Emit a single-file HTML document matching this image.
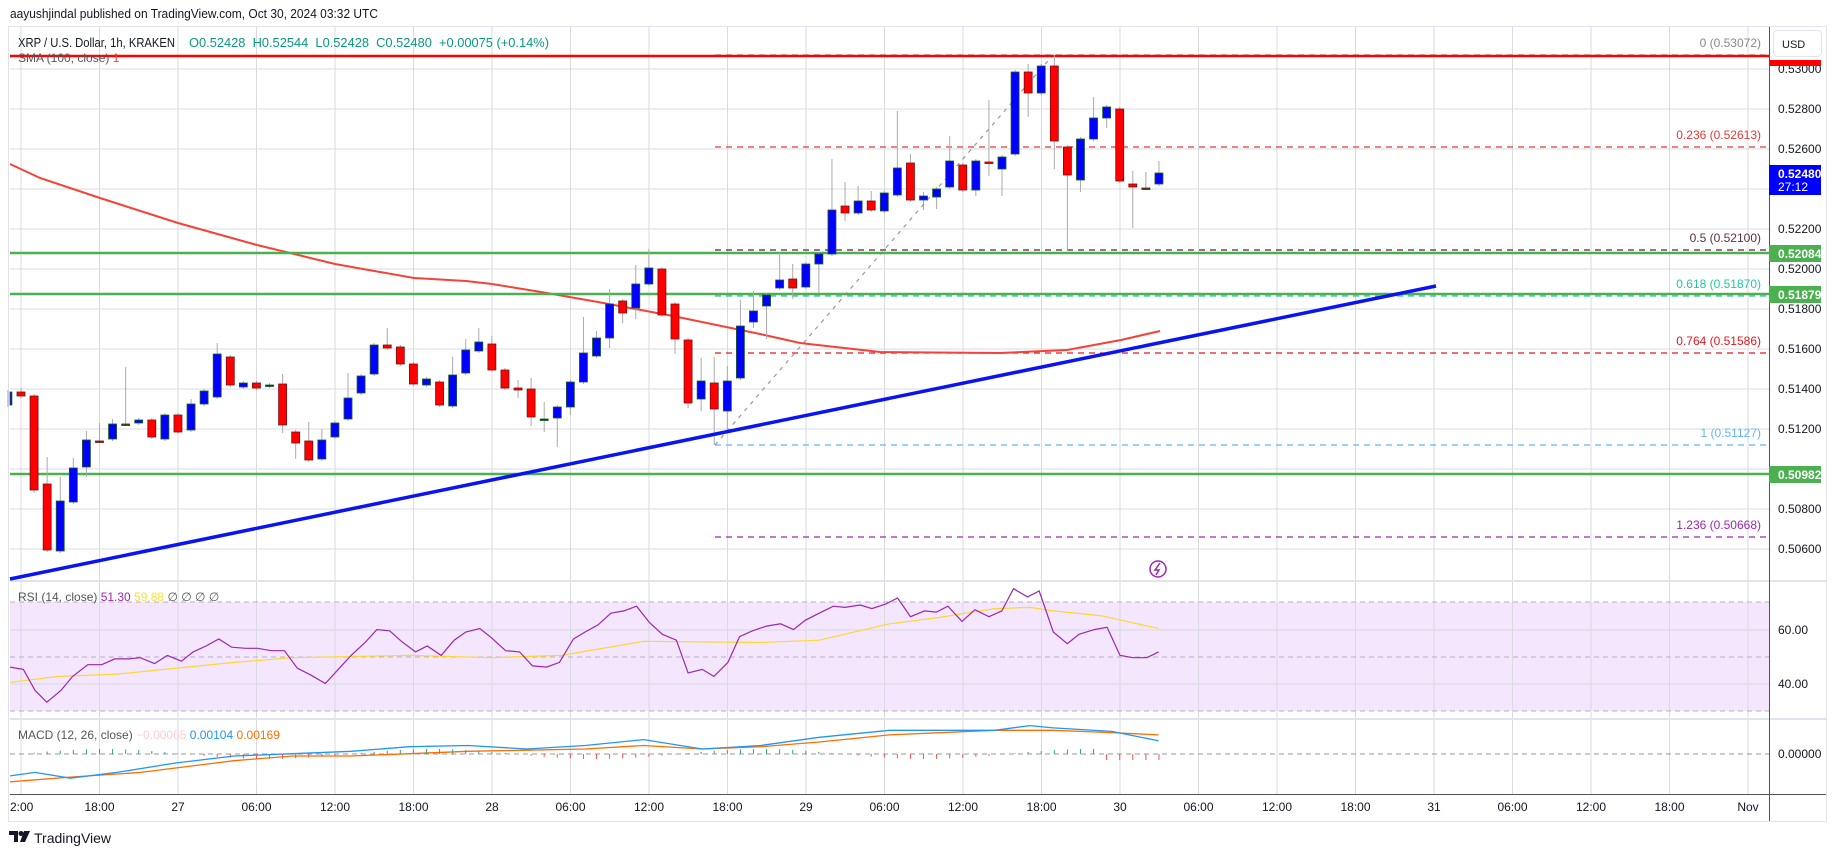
<!DOCTYPE html>
<html><head><meta charset="utf-8">
<style>
html,body{margin:0;padding:0;background:#fff;width:1835px;height:857px;overflow:hidden;font-family:"Liberation Sans","DejaVu Sans",sans-serif;}
svg text{font-family:"Liberation Sans","DejaVu Sans",sans-serif;}
</style></head>
<body>
<svg id="s" width="1835" height="857" viewBox="0 0 1835 857" xmlns="http://www.w3.org/2000/svg">
<rect x="0" y="0" width="1835" height="857" fill="#fff"/>
<text x="10" y="18" font-size="13" fill="#131722" textLength="368" lengthAdjust="spacingAndGlyphs">aayushjindal published on TradingView.com, Oct 30, 2024 03:32 UTC</text>
<rect x="8.5" y="26.5" width="1818" height="795" fill="#fff" stroke="#e0e3eb"/>
<rect x="10" y="602" width="1759" height="109" fill="#f3e6fd"/>
<g id="grid" stroke="#d9dbe0" stroke-width="1"></g>
<g stroke="#b8b0c0" stroke-dasharray="5,4" stroke-width="1">
<line x1="10" y1="602" x2="1769" y2="602"/><line x1="10" y1="657" x2="1769" y2="657"/><line x1="10" y1="711" x2="1769" y2="711"/>
<line x1="10" y1="754" x2="1769" y2="754" stroke="#999"/>
</g>
<line x1="10" y1="581" x2="1826" y2="581" stroke="#e0e3eb" stroke-width="2"/>
<line x1="10" y1="719" x2="1826" y2="719" stroke="#e0e3eb" stroke-width="2"/>
<g stroke-width="1.2" stroke-dasharray="6,5">
<line x1="715" y1="55" x2="1769" y2="55" stroke="#888"/>
<line x1="715" y1="147" x2="1769" y2="147" stroke="#e53935"/>
<line x1="715" y1="250" x2="1769" y2="250" stroke="#5d1f3f"/>
<line x1="715" y1="296" x2="1769" y2="296" stroke="#26c6a0"/>
<line x1="715" y1="353" x2="1769" y2="353" stroke="#e4181e"/>
<line x1="715" y1="445" x2="1769" y2="445" stroke="#64b5f6"/>
<line x1="715" y1="537" x2="1769" y2="537" stroke="#9c27b0"/>
<line x1="715" y1="445" x2="1053" y2="55" stroke="#999" stroke-dasharray="4,5"/>
</g>
<g font-size="12" text-anchor="end">
<text x="1761" y="47" fill="#888">0 (0.53072)</text>
<text x="1761" y="139" fill="#e53935">0.236 (0.52613)</text>
<text x="1761" y="242" fill="#5d2e46">0.5 (0.52100)</text>
<text x="1761" y="288" fill="#26c6a0">0.618 (0.51870)</text>
<text x="1761" y="345" fill="#e4181e">0.764 (0.51586)</text>
<text x="1761" y="437" fill="#64b5f6">1 (0.51127)</text>
<text x="1761" y="529" fill="#9c27b0">1.236 (0.50668)</text>
</g>
<polyline fill="none" stroke="#f44336" stroke-width="2" points="10,164 40,178 100,198 178,223 257,245 290,253 335,264 414,278 466,281 492,284 541,292 598,302 673,316 760,334 800,343 880,352 1000,353 1067,350 1121,340 1160,331"/>
<line x1="10" y1="56" x2="1769" y2="56" stroke="#ff0000" stroke-width="2.5"/>
<g stroke="#4caf50" stroke-width="2.5">
<line x1="10" y1="253" x2="1769" y2="253"/><line x1="10" y1="294" x2="1769" y2="294"/><line x1="10" y1="474" x2="1769" y2="474"/>
</g>
<g id="candles"></g>
<line x1="10" y1="579" x2="1436" y2="286" stroke="#0a14f0" stroke-width="3.5"/>
<circle cx="1158" cy="569" r="8" fill="none" stroke="#9c27b0" stroke-width="1.5"/>
<path d="M1160 563 L1155 570 L1159 570 L1156 575" fill="none" stroke="#9c27b0" stroke-width="1.5"/>
<g id="ind"></g>
<g font-size="13">
<text x="18" y="47" fill="#131722" textLength="157" lengthAdjust="spacingAndGlyphs">XRP / U.S. Dollar, 1h, KRAKEN</text>
<text x="189" y="47" fill="#089981" xml:space="preserve" textLength="360" lengthAdjust="spacingAndGlyphs">O0.52428  H0.52544  L0.52428  C0.52480  +0.00075 (+0.14%)</text>
<text x="18" y="62" fill="#555" font-size="12">SMA (100, close) <tspan fill="#f44336">1</tspan></text>
<text x="18" y="601" fill="#555" font-size="12">RSI (14, close) <tspan fill="#9c27b0">51.30</tspan> <tspan fill="#f7e13c">59.88</tspan> <tspan fill="#555">∅ ∅ ∅ ∅</tspan></text>
<text x="18" y="739" fill="#555" font-size="12">MACD (12, 26, close) <tspan fill="#ffcdd2">−0.00065</tspan> <tspan fill="#2196f3">0.00104</tspan> <tspan fill="#ff6d00">0.00169</tspan></text>
</g>
<line x1="1769.5" y1="27" x2="1769.5" y2="821" stroke="#50535e"/>
<line x1="10" y1="794.5" x2="1826" y2="794.5" stroke="#50535e"/>
<g font-size="12" fill="#131722">
<text x="1778" y="73">0.53000</text><text x="1778" y="113">0.52800</text><text x="1778" y="153">0.52600</text>
<text x="1778" y="233">0.52200</text><text x="1778" y="273">0.52000</text><text x="1778" y="313">0.51800</text>
<text x="1778" y="353">0.51600</text><text x="1778" y="393">0.51400</text><text x="1778" y="433">0.51200</text>
<text x="1778" y="513">0.50800</text><text x="1778" y="553">0.50600</text>
<text x="1778" y="634">60.00</text><text x="1778" y="688">40.00</text><text x="1778" y="758">0.00000</text>
</g>
<rect x="1773.5" y="30.5" width="48" height="26" rx="4" fill="#fff" stroke="#e0e3eb"/>
<text x="1782" y="48" font-size="11" fill="#131722">USD</text>
<rect x="1769" y="60" width="52" height="6" fill="#ff0000"/>
<rect x="1769" y="165" width="52" height="30" fill="#0000ff"/>
<text x="1778" y="178" font-size="12" font-weight="bold" fill="#fff">0.52480</text>
<text x="1778" y="191" font-size="12" fill="#fff">27:12</text>
<g font-size="12" font-weight="bold" fill="#fff">
<rect x="1769" y="245" width="52" height="17" fill="#4caf50"/><text x="1778" y="258">0.52084</text>
<rect x="1769" y="286" width="52" height="17" fill="#4caf50"/><text x="1778" y="299">0.51879</text>
<rect x="1769" y="466" width="52" height="17" fill="#4caf50"/><text x="1778" y="479">0.50982</text>
</g>
<g id="tl" font-size="12" fill="#131722" text-anchor="middle"></g>
<g transform="translate(9,831)">
<path d="M0 0 H9 V11 H5 V4 H0 Z" fill="#131722"/>
<circle cx="12" cy="2.5" r="2.5" fill="#131722"/>
<path d="M15 0 H21 L16 11 H11 Z" fill="#131722"/>
</g>
<text x="34" y="843" font-size="14" fill="#131722">TradingView</text>
</svg>
<script>
(function(){
var NS="http://www.w3.org/2000/svg";
function el(p,t,a){var e=document.createElementNS(NS,t);for(var q in a)e.setAttribute(q,a[q]);p.appendChild(e);return e;}
var g=document.getElementById('grid');
for(var yy=69;yy<=549;yy+=40)el(g,'line',{x1:10,y1:yy,x2:1769,y2:yy});
el(g,'line',{x1:10,y1:630,x2:1769,y2:630});el(g,'line',{x1:10,y1:684,x2:1769,y2:684});
var labs=["12:00","18:00","27","06:00","12:00","18:00","28","06:00","12:00","18:00","29","06:00","12:00","18:00","30","06:00","12:00","18:00","31","06:00","12:00","18:00","Nov"];
var tl=document.getElementById('tl');
for(var n=0;n<labs.length;n++){var gx=21+78.5*n;el(g,'line',{x1:gx,y1:27,x2:gx,y2:794});
 if(n>0){var t=el(tl,'text',{x:gx,y:811});t.textContent=labs[n];}}
var t0=el(tl,'text',{x:10,y:811,'text-anchor':'start'});t0.textContent="2:00";
var D={"-1":[405,392],0:[392,396,388],1:[396,490,0,493],2:[484,550,457],3:[551,501,477],4:[502,468,458],5:[467,440,431,477],6:[441,441,423],7:[439,424,419],8:[424,424,367],9:[423,420],10:[420,437],11:[439,415],12:[415,432],13:[430,404,399],14:[404,391],15:[397,354,343],16:[357,385],17:[387,383],18:[383,388],19:[386,385],20:[384,425,374,433],21:[432,443,0,459],22:[441,460,422],23:[459,440,429],24:[437,423],25:[419,398,373],26:[393,376],27:[374,345],28:[345,348,328],29:[347,364],30:[364,384],31:[385,379],32:[382,405],33:[406,375,357],34:[373,350,339],35:[351,342,328],36:[344,370,336],37:[370,388],38:[388,390,380,398],39:[389,417,378,426],40:[420,419,402,432],41:[418,407,0,447],42:[407,382,0,415],43:[382,353,317],44:[356,338,331],45:[338,304,289,348],46:[301,313,0,323],47:[308,284,265,319],48:[284,268,249],49:[269,315,267],50:[304,339,0,354],51:[340,403,338,408],52:[399,381,358,411],53:[383,409,357,445],54:[411,381,366,430],55:[378,326,300],56:[322,311,291,328],57:[306,295,0,339],58:[288,280,253],59:[279,288,264,299],60:[287,264],61:[264,254,0,293],62:[254,210,159],63:[206,213,182,221],64:[213,201,186],65:[201,210,191],66:[211,193],67:[195,168,111],68:[163,200,154],69:[200,196,192,210],70:[197,189,0,209],71:[187,161,136],72:[165,190],73:[190,161,0,196],74:[162,163,100,176],75:[169,157,0,196],76:[154,72],77:[72,93,64,117],78:[93,66],79:[66,141,55,169],80:[147,175,0,251],81:[180,139,0,192],82:[139,118,97],83:[118,107,0,128],84:[109,181],85:[184,187,171,228],86:[188,188,172],87:[184,173,161]};
var cg=document.getElementById('candles');
for(var k=-1;k<=87;k++){var d=D[k];var cx=21+13.08*k;var o=d[0],c=d[1];var bt=Math.min(o,c),bb=Math.max(o,c);
 var hi=d[2]||bt-2,lo=d[3]||bb+2;var up=c<o;
 var x0=Math.max(10,cx-4);
 el(cg,'line',{x1:cx,y1:hi,x2:cx,y2:lo,stroke:'#aaa','stroke-width':1});
 el(cg,'rect',{x:x0,y:bt,width:(cx+4)-x0,height:Math.max(1.5,bb-bt),fill:(c==o?'#1b5e20':(up?'#0000ff':'#ff0000')),stroke:(up?'#1b5e20':'#7a1010'),'stroke-width':0.8});}
var ind=document.getElementById('ind');
function pl(pts,col,w){var s=pts.map(function(p){return (p[0]*1.1703).toFixed(1)+','+(p[1]*1.1703).toFixed(1)}).join(' ');el(ind,'polyline',{points:s,fill:'none',stroke:col,'stroke-width':w});}
pl([[8.6,583],[50,578],[100,576],[200,566],[250,562],[350,560],[420,562],[480,560],[550,548],[650,549],[700,547],[760,533],[800,528],[850,520],[880,519],[900,522],[940,526],[990,537]],'#fdd835',1.2);
pl([[8.6,570],[20,572],[30,590],[40,600],[52,590],[62,578],[75,568],[87,568],[98,563],[110,563],[120,562],[132,567],[143,560],[155,565],[165,557],[176,552],[187,546],[198,553],[210,554],[220,554],[232,556],[243,556],[254,571],[266,577],[278,584],[290,571],[300,560],[312,549],[322,538],[333,539],[343,548],[355,557],[365,552],[377,560],[388,547],[398,540],[410,537],[420,545],[432,556],[444,557],[455,569],[467,570],[478,566],[490,546],[500,540],[511,534],[522,524],[533,522],[544,518],[555,532],[566,542],[578,547],[588,575],[600,572],[610,578],[622,566],[632,544],[643,539],[655,535],[667,533],[678,538],[688,530],[700,524],[712,518],[722,519],[735,517],[745,520],[757,516],[767,511],[778,527],[790,522],[800,523],[810,518],[822,531],[833,521],[845,527],[856,522],[866,503],[878,510],[888,505],[900,540],[912,550],[922,542],[935,538],[946,536],[957,560],[968,562],[980,562],[990,557]],'#9c27b0',1.2);
pl([[8.6,668],[60,664],[120,660],[200,650],[250,646],[300,646],[350,644],[400,642],[450,641],[500,640],[550,637],[600,640],[650,638],[700,634],[760,628],[850,624],[900,624],[950,626],[990,628]],'#ff6d00',1.3);
pl([[8.6,663],[30,660],[60,665],[100,660],[150,652],[200,646],[250,644],[300,642],[350,638],[400,637],[450,640],[500,637],[550,632],[600,640],[650,637],[700,630],[760,624],[800,624],[850,624],[880,620],[900,622],[950,625],[990,633]],'#2196f3',1.3);
for(var m=0;m<88;m++){var hx=21+13.08*m;var v=Math.sin(m*0.25)*5;if(m>82)v=-6;el(ind,'line',{x1:hx,y1:754,x2:hx,y2:754-v,stroke:(v>=0?'#26a69a':'#ef5350'),'stroke-width':1});}
})();
</script>
</body></html>
